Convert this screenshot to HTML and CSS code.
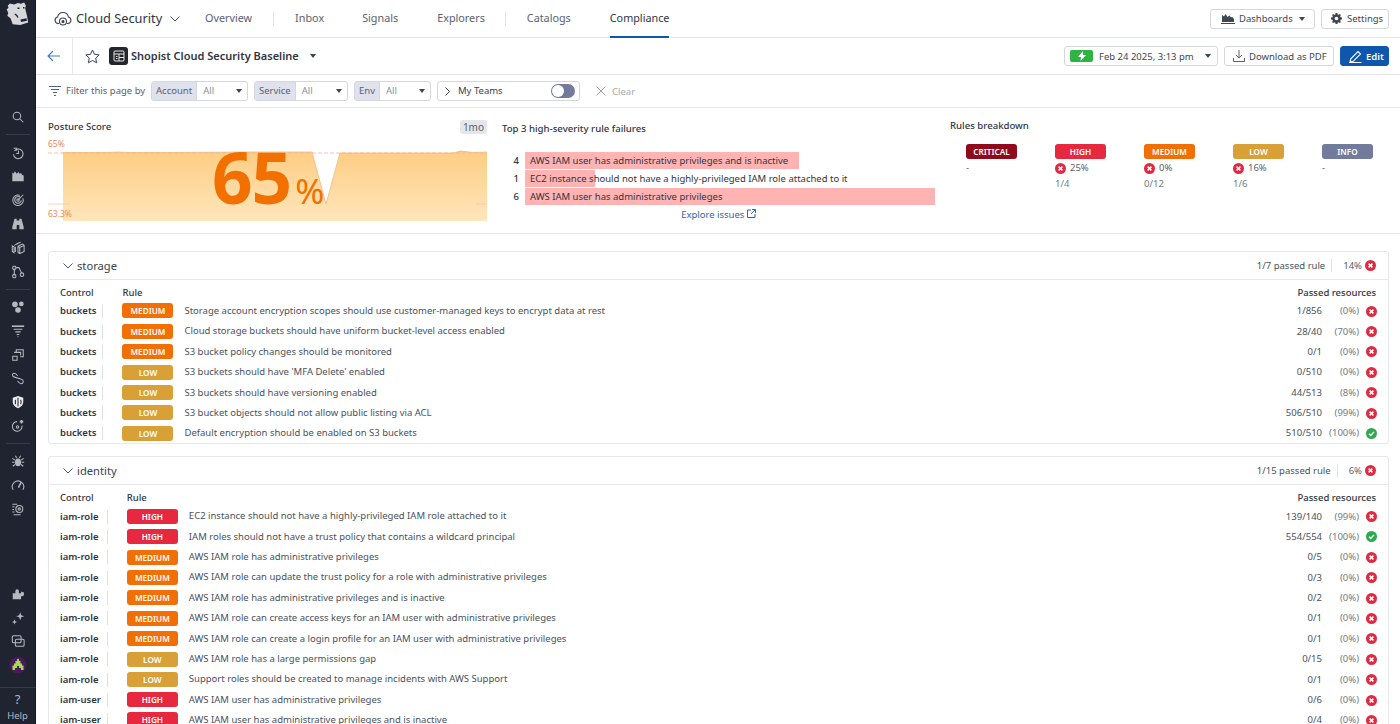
FILE: index.html
```html
<!DOCTYPE html>
<html lang="en">
<head>
<meta charset="utf-8">
<title>Shopist Cloud Security Baseline</title>
<link rel="stylesheet" href="styles.css">
</head>
<body>
<div class="app">
  <aside class="side">
    <div class="logo">
      <svg width="26" height="26" viewBox="0 0 26 26"><path fill="#d5d7da" d="M5 2.500 9 3.500 13 2l3 .8 3.200-1.300 1.600 3-.6 3 1.800 7.500 1.200 6.500-8 2.500-7.500-.8-2.200-6-3.200-2.500 1-2.800-1.600-3.400 1.800-1.800-.7-2.200z"/><path fill="#1f2430" d="M12.500 6.500h2v1.600h-2zM18 6h1.500v1.500H18zM15.500 18.500l6-1.300.5 2.600-6 1.200z"/><path fill="#1f2430" d="M10 12.500c2 .8 3 2 3.500 4l-1.200.3c-.5-1.500-1.400-2.500-2.800-3z"/></svg>
    </div>
    <div class="side-group first">
      <span class="si"><svg viewBox="0 0 16 16"><circle cx="6.800" cy="6.800" r="4.300"/><path d="m10 10 4 4"/></svg></span>
    </div>
    <hr class="side-rule">
    <div class="side-group">
      <span class="si"><svg viewBox="0 0 16 16"><path d="M3 2.500h3.500v3M4 5.500a5.500 5.500 0 1 1-1.200 4"/><path d="M8.500 5v3.500H6"/></svg></span>
      <span class="si"><svg viewBox="0 0 16 16"><path class="fl" d="M1.500 14V4l1.500 1 1.500-2.500 2 3 2-2 1.500 2 1.500-1 1 2 2 1V14z"/></svg></span>
      <span class="si"><svg viewBox="0 0 16 16"><path d="M13.500 6a6 6 0 1 1-3.500-3.300M11 5.500a3.800 3.800 0 1 0 .8 3"/><circle cx="8" cy="8" r="1.400"/><path d="m8 8 6-6"/></svg></span>
      <span class="si"><svg viewBox="0 0 16 16"><path class="fl" d="M4 2h2.500v2h3V2H12l2.500 9.500V14H9.500V9h-3v5h-5v-2.500z"/></svg></span>
      <span class="si"><svg viewBox="0 0 16 16"><path d="m8 6 5-2.500L15 5v7l-5 2.500L8 13zM8 6l2 1.500v7M10 7.500 15 5M6 3.500l5-2M3.500 5 8 3M1.500 5.500 3.500 7v6.500L1.500 12zM5 6.500V12.500"/></svg></span>
      <span class="si"><svg viewBox="0 0 16 16"><rect x="2" y="1.500" width="3.500" height="3.500" rx="1"/><rect x="2" y="11" width="3.500" height="3.500" rx="1"/><circle cx="12.500" cy="11" r="2"/><path d="M3.800 5v6M5.500 3h3.500l3 6"/></svg></span>
    </div>
    <hr class="side-rule">
    <div class="side-group">
      <span class="si"><svg viewBox="0 0 16 16"><circle class="fl" cx="4.500" cy="5" r="3.200"/><circle class="fl" cx="11.800" cy="4.500" r="2.700"/><circle class="fl" cx="8" cy="11.500" r="3.200"/></svg></span>
      <span class="si"><svg viewBox="0 0 16 16"><path d="M1 2.500h14" class="th"/><path d="M3 6h10M5 9h6M6.500 12h3M7.500 14.500h1"/></svg></span>
      <span class="si"><svg viewBox="0 0 16 16"><path d="M6 5V2h8v8h-3.500M3.500 5H11v3.500M2 9.500h5V14H2z"/></svg></span>
      <span class="si"><svg viewBox="0 0 16 16"><path d="M3.500 2.500c-2.500 0-2.500 4 .5 4.500l8 2.500c3 1 2.500 5-.5 5-2 0-3-1.500-4-3M3.500 2.500c2 0 3 1.500 4 3" /></svg></span>
      <span class="si bright"><svg viewBox="0 0 16 16"><path class="fl" d="M8 1l6 2v5c0 3.500-3 6-6 7-3-1-6-3.500-6-7V3z"/><path class="cut" d="M8 3v10M5 5.500v5M11 5.500c1 2 1 3 0 5"/></svg></span>
      <span class="si"><svg viewBox="0 0 16 16"><path d="M12.500 7.500A5.500 5.500 0 1 1 7 3"/><circle cx="7.500" cy="9" r="1.400"/><path class="th" d="M12 1v4M10 3h4"/></svg></span>
    </div>
    <hr class="side-rule">
    <div class="side-group">
      <span class="si"><svg viewBox="0 0 16 16"><ellipse class="fl" cx="8" cy="9.500" rx="3.500" ry="4.500"/><path d="M5 2l1.500 2.500M11 2 9.500 4.500M1.500 5l3 2M14.500 5l-3 2M1 9.500h3M15 9.500h-3M2 14l2.500-2M14 14l-2.500-2"/></svg></span>
      <span class="si"><svg viewBox="0 0 16 16"><path d="M2.500 13.500a6.500 6.500 0 1 1 11 0"/><path class="th" d="m8.500 11 3-6"/></svg></span>
      <span class="si"><svg viewBox="0 0 16 16"><path d="M1.500 2.500H7M1.500 5.500h2.500M1.500 8.500h2M1.500 11.500h2.500M3 14.500h8"/><circle cx="9.500" cy="8" r="4"/><circle cx="9.500" cy="8" r="1.300"/></svg></span>
    </div>
    <div class="side-spacer"></div>
    <div class="side-group">
      <span class="si"><svg viewBox="0 0 16 16"><path class="fl" d="M2 14V7h3V4.500a2 2 0 0 1 4 0V7h2.500V5.500h1a2 2 0 0 1 0 5h-1V14z"/></svg></span>
      <span class="si"><svg viewBox="0 0 16 16"><path class="fl" d="m10.500 1.500 1.200 3.300L15 6l-3.300 1.200-1.200 3.300-1.200-3.300L6 6l3.300-1.200z"/><path class="fl" d="m4 9.500.8 2.200 2.200.8-2.200.8L4 15.500l-.8-2.200-2.200-.8 2.200-.8z"/></svg></span>
      <span class="si"><svg viewBox="0 0 16 16"><rect x="1.500" y="2" width="10" height="8" rx="1.500"/><rect x="5" y="6" width="10" height="8" rx="1.500"/></svg></span>
      <span class="si big"><svg viewBox="0 0 18 18"><circle cx="9" cy="9" r="8.500" fill="#4a1a5c" stroke="none"/><path fill="#a4dc4a" stroke="none" d="M8 3h2v2h1.500v2.500H13v2h1.500V14H12v-2h-2v-2H8v2H6v2H3.500V9.500H5v-2h1.500V5H8z"/></svg></span>
    </div>
    <hr class="side-rule help-rule">
    <div class="help"><span class="help-q">?</span><span class="help-t">Help</span></div>
  </aside>

  <div class="main">
    <nav class="topbar">
      <span class="product-icon"><svg width="18" height="18" viewBox="0 0 18 18" fill="none" stroke="#3a4150" stroke-width="1.100"><path d="M5 13.500H4.200a3.300 3.300 0 0 1-.6-6.500 5.500 5.500 0 0 1 10.800 0 3.300 3.300 0 0 1-.6 6.500H13"/><circle cx="9" cy="11.500" r="3.500"/><circle cx="9" cy="11.500" r="1" fill="#3a4150"/></svg></span>
      <span class="product">Cloud Security</span>
      <svg class="chev" width="10" height="6" viewBox="0 0 10 6"><path d="m.5.500 4.500 4.500L9.500.500"/></svg>
      <a class="tab t-overview">Overview</a><i class="tab-sep s1"></i>
      <a class="tab t-inbox">Inbox</a>
      <a class="tab t-signals">Signals</a>
      <a class="tab t-explorers">Explorers</a><i class="tab-sep s2"></i>
      <a class="tab t-catalogs">Catalogs</a>
      <a class="tab active">Compliance</a>
      <span class="push"></span>
      <button class="btn btn-dash"><svg width="14" height="11" viewBox="0 0 14 11"><path fill="#3f4654" d="M1 9V2l2 1.500L4.500 1l2 3 2-1.500 1.500 2 1-.8L13 6v3z"/><path stroke="#3f4654" d="M0 10.500h14"/></svg>Dashboards<span class="caret"></span></button>
      <button class="btn btn-set"><svg width="11" height="11" viewBox="0 0 12 12"><path fill="#3f4654" fill-rule="evenodd" d="M5 0h2l.3 1.500 1.100.5L9.700 1.200l1.100 1.100L10 3.600l.5 1.100L12 5v2l-1.500.3-.5 1.100.8 1.300-1.100 1.100L8.400 10l-1.100.5L7 12H5l-.3-1.500-1.100-.5-1.300.8-1.100-1.100L2 8.400l-.5-1.100L0 7V5l1.500-.3.500-1.100-.8-1.300 1.100-1.100L3.600 2l1.100-.5zM6 4a2 2 0 1 0 0 4 2 2 0 0 0 0-4z"/></svg>Settings</button>
    </nav>

    <header class="pagehead">
      <span class="back"><svg width="14" height="12" viewBox="0 0 14 12" fill="none" stroke="#3f7dc0" stroke-width="1.100"><path d="M13 6H1M6 1 1 6l5 5"/></svg></span>
      <span class="star"><svg width="15" height="15" viewBox="0 0 15 15" fill="none" stroke="#3a4150" stroke-width="1"><path d="m7.500 1 2 4.300 4.700.6-3.500 3.200.9 4.700-4.100-2.300-4.100 2.300.9-4.700L.8 5.900l4.700-.6z"/></svg></span>
      <span class="dash-icon"><svg width="12" height="12" viewBox="0 0 12 12" fill="none" stroke="#e8e8e8" stroke-width="1"><rect x="1" y="1" width="10" height="10" rx="1"/><path d="M1 4h10M6 4v7M6 7.500h5M3 6.500h1.500M3 8.500h1.500"/></svg></span>
      <h1 class="title">Shopist Cloud Security Baseline</h1>
      <span class="caret title-caret"></span>
      <span class="push"></span>
      <button class="btn btn-date"><span class="live"><svg width="8" height="10" viewBox="0 0 8 10"><path fill="#fff" d="M5 0 0 6h3L2.500 10 8 4H5z"/></svg></span>Feb 24 2025, 3:13 pm<span class="caret date-caret"></span></button>
      <button class="btn btn-pdf"><svg width="12" height="12" viewBox="0 0 12 12" fill="none" stroke="#5a6170"><path d="M6 0v8M3 5l3 3 3-3M.5 8v3.500h11V8"/></svg>Download as PDF</button>
      <button class="btn btn-edit"><svg width="13" height="13" viewBox="0 0 13 13" fill="none" stroke="#fff" stroke-width="1.100"><path d="m1 12 .8-3.200L9 1.500l2.500 2.500-7.300 7.300zM0 12.500h12.500"/></svg>Edit</button>
    </header>

    <div class="filters">
      <svg width="12" height="10" viewBox="0 0 12 10" fill="none" stroke="#5a6170"><path d="M0 .5h12M2 3.500h8M4 6.500h4M5 9.500h2"/></svg>
      <span class="filter-label">Filter this page by</span>
      <div class="sel sel-account"><span class="sel-k">Account</span><span class="sel-v">All</span><span class="caret"></span></div>
      <div class="sel sel-service"><span class="sel-k">Service</span><span class="sel-v">All</span><span class="caret"></span></div>
      <div class="sel sel-env"><span class="sel-k">Env</span><span class="sel-v">All</span><span class="caret"></span></div>
      <div class="teams"><svg width="5" height="9" viewBox="0 0 5 9" fill="none" stroke="#3a4150"><path d="m.5.500 4 4-4 4"/></svg><span class="teams-t">My Teams</span><span class="toggle"></span></div>
      <span class="clear"><svg width="10" height="10" viewBox="0 0 10 10" stroke="#9ba0ab"><path d="m.5.500 9 9M9.500.500l-9 9"/></svg>Clear</span>
    </div>

    <section class="summary">
      <div class="posture">
        <div class="posture-head"><h2 class="sum-h">Posture Score</h2><span class="range">1mo</span></div>
        <div class="chart">
          <svg class="chart-svg" width="439" height="80" viewBox="0 0 439 80">
            <defs><linearGradient id="area" x1="0" y1="0" x2="0" y2="1"><stop offset="0" stop-color="#fdcd83"/><stop offset="1" stop-color="#ffe6bb"/></linearGradient></defs>
            <path fill="url(#area)" d="M15 10.500 H60 L70 10 80 10.500 H130 L200 10 H264 L278 62 292 11 H405 L413 9 425 10.500 439 10 V79 H15Z"/>
            <path fill="none" stroke="#f3b978" stroke-width=".8" d="M15 10.500 H60 L70 10 80 10.500 H130 L200 10 H264 L278 62 292 11 H405 L413 9 425 10.500 439 10"/>
            <path stroke="#f7b3a0" stroke-width=".8" stroke-dasharray="4 2" d="M0 11H439"/>
            <path stroke="#f7c7a8" stroke-width=".8" d="M0 62H22M428 62H439"/>
          </svg>
          <span class="axis axis-top">65%</span>
          <span class="axis axis-bot">63.3%</span>
          <div class="score"><span class="score-n">65</span><span class="score-p">%</span></div>
        </div>
      </div>
      <div class="top3">
        <h2 class="sum-h">Top 3 high-severity rule failures</h2>
        <div class="fails">
          <div class="fail"><span class="fail-n">4</span><div class="fail-track"><div class="fail-bar" style="width:66.8%"></div><span class="fail-t">AWS IAM user has administrative privileges and is inactive</span></div></div>
          <div class="fail"><span class="fail-n">1</span><div class="fail-track"><div class="fail-bar" style="width:17%"></div><span class="fail-t">EC2 instance should not have a highly-privileged IAM role attached to it</span></div></div>
          <div class="fail"><span class="fail-n">6</span><div class="fail-track"><div class="fail-bar" style="width:100%"></div><span class="fail-t">AWS IAM user has administrative privileges</span></div></div>
        </div>
        <a class="explore">Explore issues <svg width="9" height="9" viewBox="0 0 9 9" fill="none" stroke="#2a66b0"><path d="M4 1H.5v7.500H8V5M5 .5h3.500V4M8.500.5 4 5"/></svg></a>
      </div>
      <div class="breakdown">
        <h2 class="sum-h">Rules breakdown</h2>
        <div class="bd-cols">
          <div class="bd"><span class="badge critical">CRITICAL</span><div class="bd-p">-</div></div>
          <div class="bd"><span class="badge high">HIGH</span><div class="bd-p"><svg class="st"><use href="#fail"/></svg>25%</div><div class="bd-c">1/4</div></div>
          <div class="bd"><span class="badge medium">MEDIUM</span><div class="bd-p"><svg class="st"><use href="#fail"/></svg>0%</div><div class="bd-c">0/12</div></div>
          <div class="bd"><span class="badge low">LOW</span><div class="bd-p"><svg class="st"><use href="#fail"/></svg>16%</div><div class="bd-c">1/6</div></div>
          <div class="bd"><span class="badge info">INFO</span><div class="bd-p">-</div></div>
        </div>
      </div>
    </section>

    <div class="groups">
      <section class="card">
        <div class="card-head">
          <svg class="card-chev" width="10" height="6" viewBox="0 0 10 6"><path d="m.5.500 4.500 4.500L9.500.500"/></svg>
          <h3 class="card-title">storage</h3><span class="push"></span>
          <span class="card-pass">1/7 passed rule</span><i class="card-sep"></i><span class="card-pct">14%</span><svg class="st"><use href="#fail"/></svg>
        </div>
        <table class="rules">
          <thead><tr><th class="c-ctrl">Control</th><th>Rule</th><th class="c-res" colspan="3">Passed resources</th></tr></thead>
          <tbody>
            <tr><td class="c-ctrl"><span>buckets</span></td><td class="c-rule"><span class="badge medium">MEDIUM</span>Storage account encryption scopes should use customer-managed keys to encrypt data at rest</td><td class="c-n">1/856</td><td class="c-p">(0%)</td><td class="c-s"><svg class="st"><use href="#fail"/></svg></td></tr>
            <tr><td class="c-ctrl"><span>buckets</span></td><td class="c-rule"><span class="badge medium">MEDIUM</span>Cloud storage buckets should have uniform bucket-level access enabled</td><td class="c-n">28/40</td><td class="c-p">(70%)</td><td class="c-s"><svg class="st"><use href="#fail"/></svg></td></tr>
            <tr><td class="c-ctrl"><span>buckets</span></td><td class="c-rule"><span class="badge medium">MEDIUM</span>S3 bucket policy changes should be monitored</td><td class="c-n">0/1</td><td class="c-p">(0%)</td><td class="c-s"><svg class="st"><use href="#fail"/></svg></td></tr>
            <tr><td class="c-ctrl"><span>buckets</span></td><td class="c-rule"><span class="badge low">LOW</span>S3 buckets should have 'MFA Delete' enabled</td><td class="c-n">0/510</td><td class="c-p">(0%)</td><td class="c-s"><svg class="st"><use href="#fail"/></svg></td></tr>
            <tr><td class="c-ctrl"><span>buckets</span></td><td class="c-rule"><span class="badge low">LOW</span>S3 buckets should have versioning enabled</td><td class="c-n">44/513</td><td class="c-p">(8%)</td><td class="c-s"><svg class="st"><use href="#fail"/></svg></td></tr>
            <tr><td class="c-ctrl"><span>buckets</span></td><td class="c-rule"><span class="badge low">LOW</span>S3 bucket objects should not allow public listing via ACL</td><td class="c-n">506/510</td><td class="c-p">(99%)</td><td class="c-s"><svg class="st"><use href="#fail"/></svg></td></tr>
            <tr><td class="c-ctrl"><span>buckets</span></td><td class="c-rule"><span class="badge low">LOW</span>Default encryption should be enabled on S3 buckets</td><td class="c-n">510/510</td><td class="c-p">(100%)</td><td class="c-s"><svg class="st"><use href="#pass"/></svg></td></tr>
          </tbody>
        </table>
      </section>
      <section class="card">
        <div class="card-head">
          <svg class="card-chev" width="10" height="6" viewBox="0 0 10 6"><path d="m.5.500 4.500 4.500L9.500.500"/></svg>
          <h3 class="card-title">identity</h3><span class="push"></span>
          <span class="card-pass">1/15 passed rule</span><i class="card-sep"></i><span class="card-pct">6%</span><svg class="st"><use href="#fail"/></svg>
        </div>
        <table class="rules">
          <thead><tr><th class="c-ctrl">Control</th><th>Rule</th><th class="c-res" colspan="3">Passed resources</th></tr></thead>
          <tbody>
            <tr><td class="c-ctrl"><span>iam-role</span></td><td class="c-rule"><span class="badge high">HIGH</span>EC2 instance should not have a highly-privileged IAM role attached to it</td><td class="c-n">139/140</td><td class="c-p">(99%)</td><td class="c-s"><svg class="st"><use href="#fail"/></svg></td></tr>
            <tr><td class="c-ctrl"><span>iam-role</span></td><td class="c-rule"><span class="badge high">HIGH</span>IAM roles should not have a trust policy that contains a wildcard principal</td><td class="c-n">554/554</td><td class="c-p">(100%)</td><td class="c-s"><svg class="st"><use href="#pass"/></svg></td></tr>
            <tr><td class="c-ctrl"><span>iam-role</span></td><td class="c-rule"><span class="badge medium">MEDIUM</span>AWS IAM role has administrative privileges</td><td class="c-n">0/5</td><td class="c-p">(0%)</td><td class="c-s"><svg class="st"><use href="#fail"/></svg></td></tr>
            <tr><td class="c-ctrl"><span>iam-role</span></td><td class="c-rule"><span class="badge medium">MEDIUM</span>AWS IAM role can update the trust policy for a role with administrative privileges</td><td class="c-n">0/3</td><td class="c-p">(0%)</td><td class="c-s"><svg class="st"><use href="#fail"/></svg></td></tr>
            <tr><td class="c-ctrl"><span>iam-role</span></td><td class="c-rule"><span class="badge medium">MEDIUM</span>AWS IAM role has administrative privileges and is inactive</td><td class="c-n">0/2</td><td class="c-p">(0%)</td><td class="c-s"><svg class="st"><use href="#fail"/></svg></td></tr>
            <tr><td class="c-ctrl"><span>iam-role</span></td><td class="c-rule"><span class="badge medium">MEDIUM</span>AWS IAM role can create access keys for an IAM user with administrative privileges</td><td class="c-n">0/1</td><td class="c-p">(0%)</td><td class="c-s"><svg class="st"><use href="#fail"/></svg></td></tr>
            <tr><td class="c-ctrl"><span>iam-role</span></td><td class="c-rule"><span class="badge medium">MEDIUM</span>AWS IAM role can create a login profile for an IAM user with administrative privileges</td><td class="c-n">0/1</td><td class="c-p">(0%)</td><td class="c-s"><svg class="st"><use href="#fail"/></svg></td></tr>
            <tr><td class="c-ctrl"><span>iam-role</span></td><td class="c-rule"><span class="badge low">LOW</span>AWS IAM role has a large permissions gap</td><td class="c-n">0/15</td><td class="c-p">(0%)</td><td class="c-s"><svg class="st"><use href="#fail"/></svg></td></tr>
            <tr><td class="c-ctrl"><span>iam-role</span></td><td class="c-rule"><span class="badge low">LOW</span>Support roles should be created to manage incidents with AWS Support</td><td class="c-n">0/1</td><td class="c-p">(0%)</td><td class="c-s"><svg class="st"><use href="#fail"/></svg></td></tr>
            <tr><td class="c-ctrl"><span>iam-user</span></td><td class="c-rule"><span class="badge high">HIGH</span>AWS IAM user has administrative privileges</td><td class="c-n">0/6</td><td class="c-p">(0%)</td><td class="c-s"><svg class="st"><use href="#fail"/></svg></td></tr>
            <tr><td class="c-ctrl"><span>iam-user</span></td><td class="c-rule"><span class="badge high">HIGH</span>AWS IAM user has administrative privileges and is inactive</td><td class="c-n">0/4</td><td class="c-p">(0%)</td><td class="c-s"><svg class="st"><use href="#fail"/></svg></td></tr>
          </tbody>
        </table>
      </section>
    </div>
  </div>
</div>
<svg width="0" height="0" class="defs">
  <symbol id="fail" viewBox="0 0 11 11"><circle cx="5.5" cy="5.5" r="5.5" fill="#e02a42"/><path d="m3.600 3.600 3.800 3.800M7.400 3.600 3.600 7.400" stroke="#fff" stroke-width="1.500"/></symbol>
  <symbol id="pass" viewBox="0 0 11 11"><circle cx="5.5" cy="5.5" r="5.5" fill="#2fa84f"/><path d="m3 5.700 1.800 1.800L8 3.900" stroke="#fff" stroke-width="1.400" fill="none"/></symbol>
</svg>
</body>
</html>
```

FILE: styles.css
```css
* { box-sizing: border-box; }
html, body { margin: 0; height: 724px; overflow: hidden; }
body { font-family: "Noto Sans", "Open Sans", sans-serif; font-size: 9.5px; color: #3a4150; background: #fff; }
.defs { position: absolute; }
.app { display: flex; height: 724px; }
h1, h2, h3 { margin: 0; font-weight: 400; }

/* Sidebar */
.side { width: 36px; flex: none; background: #1f2430; display: flex; flex-direction: column; align-items: center; border-right: 1px solid #14171f; }
.logo { height: 27px; margin-top: 1px; }
.side-group { display: flex; flex-direction: column; }
.side-group.first { margin-top: 77.5px; }
.si { width: 24px; height: 23.8px; display: flex; align-items: center; justify-content: center; }
.si svg { width: 14px; height: 14px; fill: none; stroke: #b4b8bf; stroke-width: 1.2; }
.si.big svg { width: 18px; height: 18px; }
.si .fl { fill: #b4b8bf; stroke: none; }
.si .th { stroke-width: 1.8; }
.si.bright .fl { fill: #eceef0; }
.si .cut { stroke: #1f2430; }
.side-rule { width: 24px; height: 1px; margin: 5px 0 5.5px; border: 0; background: #363b47; }
.side-rule.help-rule { width: 36px; margin: 10px 0 0; }
.side-spacer { flex: 1; }
.help { height: 36px; display: flex; flex-direction: column; align-items: center; color: #b4b8bf; }
.help-q { font-size: 13px; line-height: 20px; margin-top: 1px; }
.help-t { font-size: 9.5px; line-height: 13px; }

/* Main column */
.main { flex: 1; min-width: 0; display: flex; flex-direction: column; }
.push { flex: 1; }
.caret { display: inline-block; flex: none; width: 0; height: 0; border: 3.5px solid transparent; border-top: 4px solid #3f4654; border-bottom: 0; }

.topbar { height: 38px; flex: none; display: flex; align-items: center; border-bottom: 1px solid #e6e8ec; padding: 0 11px 0 18px; }
.product-icon { width: 18px; height: 18px; margin-right: 4px; }
.product { font-size: 12.8px; color: #2f3542; margin: 0 7px 2px 0; width: 87px; white-space: nowrap; }
.chev, .card-chev { fill: none; stroke: #4a5160; flex: none; }
.tab { font-size: 10.8px; color: #5a6170; white-space: nowrap; line-height: 36px; height: 38px; }
.t-overview { margin-left: 25px; }
.tab-sep { width: 1px; height: 14px; background: #dfe1e6; }
.tab-sep.s1 { margin-left: 21px; }
.t-inbox { margin-left: 21px; }
.t-signals { margin-left: 38px; }
.t-explorers { margin-left: 39px; }
.tab-sep.s2 { margin-left: 20px; }
.t-catalogs { margin-left: 21px; }
.tab.active { margin-left: 39px; color: #2f3542; border-bottom: 2px solid #0f56ad; }
.btn { height: 20px; display: inline-flex; align-items: center; gap: 4px; padding: 0 8px; border: 1px solid #d4d7dd; border-radius: 3px; background: #fff; color: #3f4654; font: 400 9.5px "Noto Sans", sans-serif; white-space: nowrap; }
.btn svg { flex: none; }
.btn-dash { width: 105px; padding: 0 10px; margin-right: 6px; }
.btn-dash .caret { margin-left: 2px; }
.btn-set { width: 68px; padding: 0 9px; gap: 5px; }

.pagehead { height: 37px; flex: none; display: flex; align-items: center; border-bottom: 1px solid #e6e8ec; padding-right: 11px; }
.back { width: 37px; height: 36px; display: flex; align-items: center; justify-content: center; border-right: 1px solid #e6e8ec; padding-right: 1px; }
.star { margin-left: 12px; width: 15px; height: 15px; display: flex; }
.dash-icon { margin-left: 9px; width: 19px; height: 18px; border-radius: 3px; background: #23262c; display: flex; align-items: center; justify-content: center; }
.title { margin: 0 0 2px 3px; font-size: 11px; font-weight: 600; color: #2f3542; white-space: nowrap; }
.title-caret { margin-left: 11px; }
.btn-date { width: 154px; padding: 0 6px 0 5px; margin-right: 6px; gap: 6px; }
.live { width: 23px; height: 12px; border-radius: 2px; background: #2fb344; display: flex; align-items: center; justify-content: center; }
.date-caret { margin-left: 5px; }
.btn-pdf { width: 110px; margin-right: 6px; }
.btn-edit { width: 49px; background: #0f56ad; border-color: #0f56ad; color: #fff; font-weight: 600; }

.filters { height: 33px; flex: none; display: flex; align-items: center; border-bottom: 1px solid #e6e8ec; padding-left: 13px; }
.filter-label { margin: 0 5px 2px; color: #5a6170; white-space: nowrap; width: 80px; }
.sel { height: 20px; display: flex; align-items: center; border: 1px solid #d4d7dd; border-radius: 3px; margin-right: 6px; color: #5a6170; }
.sel-k { height: 18px; line-height: 17px; padding: 0 4px; background: #dfe2ec; white-space: nowrap; border-right: 1px solid #d4d7dd; }
.sel-v { padding-left: 6px; color: #8a8f9c; flex: 1; margin-bottom: 2px; }
.sel .caret { margin-right: 5px; }
.sel-account { width: 97px; }
.sel-service { width: 94px; }
.sel-env { width: 77px; }
.teams { width: 143px; height: 20px; display: flex; align-items: center; border: 1px solid #d4d7dd; border-radius: 3px; padding: 0 4px 0 7px; color: #3a4150; }
.teams-t { margin: 0 0 2px 8px; flex: 1; white-space: nowrap; }
.toggle { width: 24px; height: 14px; border-radius: 7px; background: #737b9c; position: relative; }
.toggle::before { content: ""; position: absolute; left: 1px; top: 1px; width: 12px; height: 12px; border-radius: 50%; background: #fff; }
.clear { margin-left: 16px; display: flex; align-items: center; gap: 6px; color: #a5a9b3; }

/* Summary */
.summary { height: 126px; flex: none; display: grid; grid-template-columns: 439px 433px 1fr; column-gap: 15px; padding: 12px 12px 0; border-bottom: 1px solid #e6e8ec; }
.sum-h { font-size: 9.6px; font-weight: 500; color: #2f3542; line-height: 14px; }
.posture-head { display: flex; justify-content: space-between; align-items: center; height: 14px; }
.range { height: 14px; line-height: 14px; padding: 0 3px; border-radius: 3px; background: #e4e6ec; color: #5a6170; font-size: 10px; }
.chart { position: relative; height: 80px; margin-top: 8px; }
.chart-svg { display: block; }
.axis { position: absolute; left: 0; font-size: 8.5px; line-height: 10px; color: #ec8a5a; }
.axis-top { top: -3px; }
.axis-bot { top: 67px; }
.score { position: absolute; left: 164px; top: 0; display: flex; align-items: baseline; color: #f27000; height: 62px; }
.score-n { font-size: 71px; font-weight: 700; line-height: 76px; letter-spacing: -1px; margin-top: -3px; }
.score-p { font-size: 35px; line-height: 32px; margin-left: 4px; font-weight: 400; }
.top3 { padding-top: 2px; }
.fails { margin-top: 16px; display: flex; flex-direction: column; gap: 1px; }
.fail { display: flex; align-items: center; height: 17px; }
.fail-n { width: 23px; text-align: right; padding-right: 6px; font-weight: 500; color: #2f3542; }
.fail-track { flex: 1; position: relative; height: 17px; }
.fail-bar { height: 17px; background: #ffb3b3; }
.fail-t { position: absolute; left: 5px; top: 0; line-height: 17px; color: #2f3542; white-space: nowrap; }
.explore { display: block; margin-top: 3px; text-align: center; color: #2a66b0; line-height: 14px; }
.breakdown { margin-top: -1px; }
.bd-cols { display: grid; grid-template-columns: repeat(5, 89px); margin: 11px 0 0 16px; }
.bd { display: flex; flex-direction: column; align-items: flex-start; }
.bd-p { display: flex; align-items: center; gap: 4px; line-height: 16px; margin-top: 1px; color: #5a6170; }
.bd-c { line-height: 16px; color: #737985; }
.badge { display: inline-block; width: 51px; height: 15px; line-height: 15px; border-radius: 3px; text-align: center; font-size: 8.2px; font-weight: 600; color: #fff; white-space: nowrap; }
.badge.critical { background: #8f0b1c; }
.badge.high { background: #e7293f; }
.badge.medium { background: #f26f06; }
.badge.low { background: #d9a037; }
.badge.info { background: #737b9c; }
.st { width: 11px; height: 11px; flex: none; display: block; }

/* Groups */
.groups { padding: 17px 11px 0 12px; display: flex; flex-direction: column; gap: 12px; }
.card { border: 1px solid #e6e8ec; border-radius: 3px; }
.card-head { height: 28px; display: flex; align-items: center; padding: 0 12px 0 14px; border-bottom: 1px solid #e6e8ec; }
.card-title { margin-left: 4px; font-size: 11.2px; color: #3a4150; }
.card-pass { color: #4a5160; }
.card-sep { width: 1px; height: 13px; background: #dfe1e6; margin: 0 11px 0 6px; }
.card-pct { margin-right: 3px; color: #5a6170; }
.rules { width: 100%; border-collapse: collapse; margin: 5px 0 0; }
.rules th { font-weight: 500; color: #2f3542; text-align: left; height: 16px; padding: 0; line-height: 16px; }
.rules td { height: 20.4px; padding: 0; line-height: 14px; white-space: nowrap; }
.c-ctrl { padding-left: 11px !important; width: 1px; white-space: nowrap; }
.rules td.c-ctrl span { display: block; font-weight: 600; color: #2f3542; padding-right: 7px; margin-right: 19px; position: relative; }
.rules td.c-ctrl span::after { content: ""; position: absolute; right: 0; top: 0; width: 1px; height: 14px; background: #dfe1e6; }
.c-rule { color: #4a5160; }
.c-rule .badge { margin-right: 11px; vertical-align: middle; margin-top: -1px; }
.rules th.c-res { text-align: right; padding-right: 12px; }
.c-n { width: 1px; text-align: right; color: #4a5160; }
.c-p { width: 37px; text-align: right; color: #737985; }
.c-s { width: 29px; padding-left: 7px !important; padding-right: 11px !important; }
.rules tbody tr:last-child td { height: 20px; }
```
